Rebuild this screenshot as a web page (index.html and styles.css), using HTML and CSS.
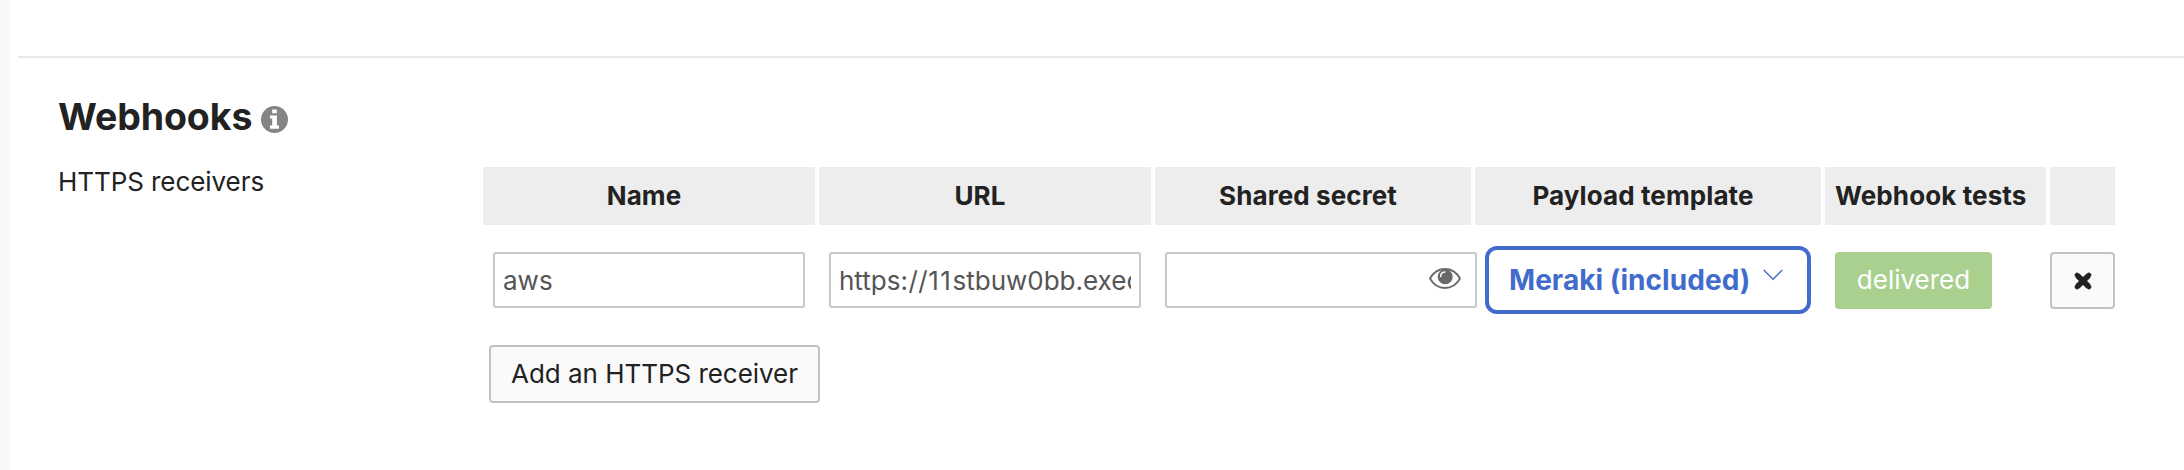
FILE: index.html
```html
<!DOCTYPE html>
<html lang="en">
<head>
<meta charset="utf-8">
<title>Webhooks</title>
<link rel="stylesheet" href="styles.css">
</head>
<body>
<div class="page">
  <main class="content">
    <section class="webhooks">
      <h2 class="title"><span class="title-text">Webhooks</span>
        <svg class="info" viewBox="0 0 27 27"><circle cx="13.5" cy="13.5" r="13.5" fill="#858587"/><path fill="#fff" d="M11.2 3.400h4.600v3.900h-4.600zM9 9.400h6.900v10.200H18v3.100H9v-3.100h2.200v-7.100H9z"/></svg>
      </h2>
      <div class="setting">
        <div class="label"><span>HTTPS receivers</span></div>
        <div class="receivers">
          <div class="grid head">
            <div class="th"><span>Name</span></div>
            <div class="th"><span>URL</span></div>
            <div class="th"><span>Shared secret</span></div>
            <div class="th"><span>Payload template</span></div>
            <div class="th tests"><span>Webhook tests</span></div>
            <div class="th"></div>
          </div>
          <div class="grid row">
            <div class="cell"><div class="field"><span>aws</span></div></div>
            <div class="cell"><div class="field"><span class="url">https<span class="sep">://</span><span class="ones">11</span>stbuw0bb.exec</span></div></div>
            <div class="cell"><div class="field secret">
              <svg class="eye" viewBox="0 0 32 21"><path fill="#fff" stroke="#69696b" stroke-width="1.8" d="M1 10.500C4.300 4.500 9.700 1 16 1s11.700 3.500 15 9.500C27.700 16.500 22.300 20 16 20S4.300 16.500 1 10.500z"/><circle cx="16.200" cy="8.700" r="7.500" fill="#69696b"/><path d="M11.700 8.500c0-2.500 1.700-4.300 4.200-4.400" fill="none" stroke="#fff" stroke-width="1.500" stroke-linecap="round"/></svg>
            </div></div>
            <div class="cell"><div class="select"><span>Meraki (included)</span>
              <svg class="chevron" viewBox="0 0 20 12"><path d="M.8 1 10 10.300 19.200 1" fill="none" stroke="#416ccb" stroke-width="1.300"/></svg>
            </div></div>
            <div class="cell"><div class="status"><span>delivered</span></div></div>
            <div class="remove"><svg class="cross" viewBox="0 0 18 18"><path d="M3.400 3.400 14.600 14.600M14.600 3.400 3.400 14.600" stroke="#222" stroke-width="5.600" stroke-linecap="butt" fill="none"/><path d="M3.100 3.100 14.900 14.900M14.900 3.100 3.100 14.900" stroke="#222" stroke-width="4.800" stroke-linecap="round" fill="none"/></svg></div>
          </div>
          <div class="add"><span>Add an HTTPS receiver</span></div>
        </div>
      </div>
    </section>
  </main>
</div>
</body>
</html>
```
FILE: styles.css
```css
* { box-sizing: border-box; }
body {
  margin: 0;
  background: #fff;
  color: #222;
  font: 26px/32px Inter, "Liberation Sans", sans-serif;
}
svg { display: block; flex: none; }
span { white-space: nowrap; }
.page {
  height: 470px;
  border-left: 10px solid #f7f7f7;
  padding: 56px 0 0 8px;
  overflow: hidden;
}
.webhooks { border-top: 2px solid #e8e8e8; padding: 36px 0 0 40px; }
.title {
  display: flex;
  align-items: center;
  gap: 9px;
  margin: 0;
  height: 46px;
  font-size: 37.5px;
  letter-spacing: -0.1px;
  line-height: 46px;
  font-weight: 700;
}
.title-text { width: 194px; }
.info { width: 27px; height: 27px; margin: 4px 0 0; }
.setting { display: flex; padding-top: 27px; }
.label { width: 425px; letter-spacing: -0.07px; }
.label span { display: block; margin-top: -1px; }
.grid {
  display: grid;
  grid-template-columns: 332px 332px 316px 346px 221px 65px;
  column-gap: 4px;
}
.th {
  display: flex;
  align-items: center;
  justify-content: center;
  height: 58px;
  padding-right: 10px;
  background: #ededed;
  font-weight: 700;
  letter-spacing: 0.1px;
}
.tests { justify-content: flex-start; padding: 0 0 0 10px; }
.row { height: 68px; margin-top: 21px; align-items: center; }
.cell { padding: 0 10px; min-width: 0; }
.field {
  display: flex;
  align-items: center;
  width: 312px;
  height: 56px;
  margin-top: -1px;
  padding: 2px 8px 0;
  border: 2px solid #c8c8c8;
  border-radius: 3px;
  color: #555;
}
.url { overflow: hidden; }
.sep { letter-spacing: 0.5px; }
.ones { letter-spacing: 1.6px; }
.secret { justify-content: flex-end; padding-right: 14px; }
.eye { width: 32px; height: 21px; margin-top: -5px; }
.select {
  display: flex;
  align-items: center;
  width: 326px;
  height: 68px;
  padding-left: 20px;
  border: 4px solid #416ccb;
  border-radius: 12px;
  color: #416ccb;
  font-size: 28px;
  font-weight: 700;
  letter-spacing: 0.05px;
}
.chevron { width: 20px; height: 12px; margin: -10px 0 0 13px; }
.status {
  display: flex;
  align-items: center;
  justify-content: center;
  width: 157px;
  height: 57px;
  border-radius: 4px;
  background: #aad08f;
  color: #fff;
}
.remove, .add {
  display: flex;
  align-items: center;
  justify-content: center;
  border: 2px solid #c2c2c2;
  border-radius: 4px;
  background: #fafafa;
}
.remove { width: 65px; height: 57px; }
.cross { width: 18px; height: 18px; margin: 2px 0 0; }
.add { width: 331px; height: 58px; margin: 31px 0 0 6px; letter-spacing: -0.04px; }
```
